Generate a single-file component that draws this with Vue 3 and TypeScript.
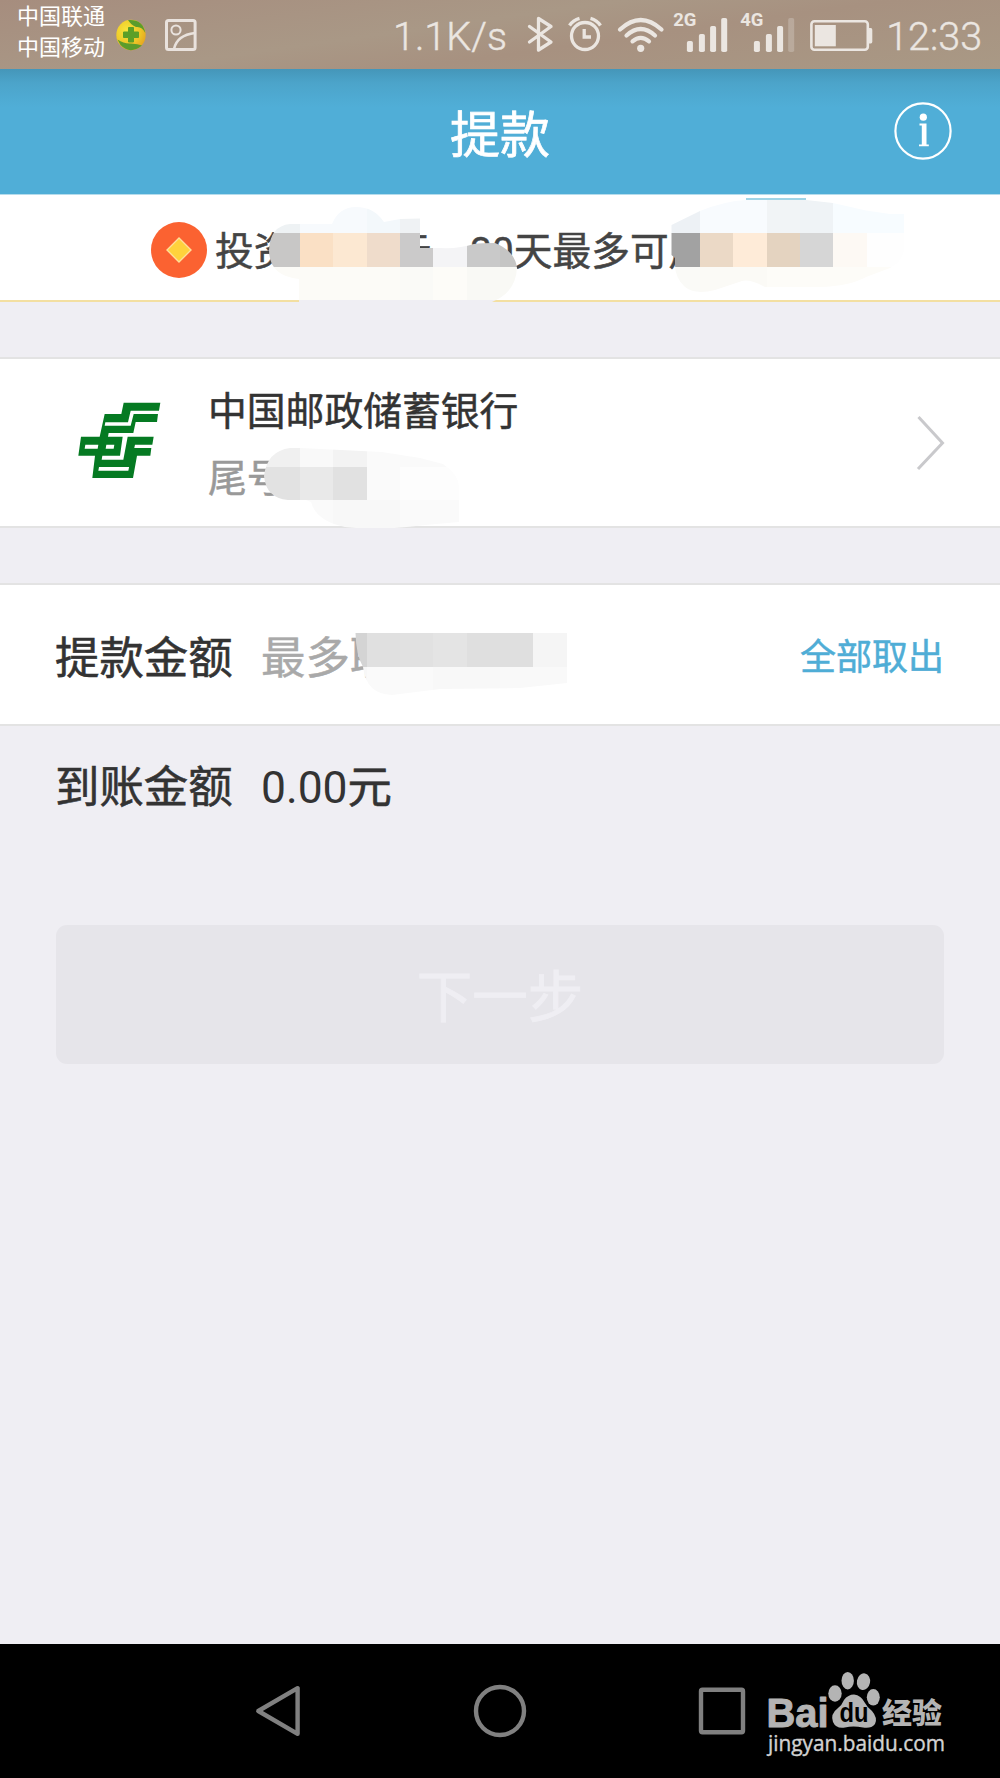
<script setup lang="ts">
interface Block {
  x: number
  y: number
  w: number
  h: number
  c: string
}
interface Mosaic {
  id: string
  path: string
  blocks: Block[]
}

const U = 100 / 3

// Builds one row of mosaic blocks; each entry is [first column, column count, colour].
function row(r: number, cells: [number, number, string][]): Block[] {
  return cells.map(([col, n, c]) => ({ x: col * U, y: r * U, w: n * U, h: U, c }))
}

const promoMosaics: Mosaic[] = [
  {
    id: 'amount',
    path: 'M269 250Q270 226 290 224H332Q339 207 356 207Q374 207 384 222L400 219L420 218.5V248H440Q459 249 474 244Q482 243 495 243Q515 251 517 268Q516 288 500 298L492 302H299V279Q269 276 269 250Z',
    blocks: [
      ...row(6, [[8, 1, '#eef2f4'], [9, 2, '#f7fafd'], [11, 1, '#f3f8fb'], [12, 1, '#eff2f4']]),
      ...row(7, [[8, 1, '#c8c7c6'], [9, 1, '#fae0c5'], [10, 1, '#fce8d2'], [11, 1, '#efdccb'], [12, 1, '#cbcaca'], [13, 1, '#f4f4f6'], [14, 1, '#c9c9c9'], [15, 1, '#c5c5c4']]),
      ...row(8, [[8, 4, '#fcfbf7'], [12, 1, '#fafaf7'], [13, 1, '#fdfcf8'], [14, 2, '#f9f9f5']]),
      ...row(9, [[8, 8, '#efeef3']]),
    ],
  },
  {
    id: 'limit',
    path: 'M671.5 225L700 211Q725 201 746 200H806L833 203L866 210.5L890 214H904V250Q902 262 890 268L866 277Q850 286 820 287H765Q750 279 742 281L715 290Q695 295 685 287Q675 278 675 265V258L671.5 255Z',
    blocks: [
      ...row(5, [[20, 8, '#f8fbfe']]),
      ...row(6, [[20, 1, '#edf1f5'], [21, 2, '#f8fbfe'], [23, 1, '#f1f4f6'], [24, 1, '#eff3f6'], [25, 3, '#f7fcff']]),
      ...row(7, [[20, 1, '#a2a2a2'], [21, 1, '#ebd9c6'], [22, 1, '#feebd8'], [23, 1, '#e4d3c0'], [24, 1, '#d6d6d6'], [25, 1, '#fdf9f4'], [26, 2, '#fefefe']]),
      ...row(8, [[20, 1, '#fafaf7'], [21, 2, '#fbfaf6'], [23, 5, '#fdfcf8']]),
    ],
  },
]

const bankMosaic: Mosaic = {
  id: 'card',
  path: 'M264 476Q267 451 290 448H300L382 452L420 458L443 464Q458 474 459 486V522L425 525Q380 531 345 527Q316 521 311 502L306 500H288Q266 498 264 476Z',
  blocks: [
    ...row(13, [[7, 2, '#f0f0f0'], [9, 1, '#f9f9f9'], [10, 1, '#f3f3f3'], [11, 3, '#fafafa']]),
    ...row(14, [[7, 2, '#e2e2e2'], [9, 1, '#e9e9e9'], [10, 1, '#e1e1e1'], [11, 1, '#fafafa'], [12, 2, '#fdfdfd']]),
    ...row(15, [[7, 3, '#fafafa'], [10, 2, '#f8f8f8'], [12, 2, '#fafafa']]),
  ],
}

const limitMosaic: Mosaic = {
  id: 'max',
  path: 'M355.5 633H567V683L520 688L440 689L392 695Q366 694 363 667Q356 655 355.5 633Z',
  blocks: [
    ...row(19, [[10, 1, '#d4d4d4'], [11, 1, '#e0e0e0'], [12, 1, '#e1e1e1'], [13, 1, '#e4e4e4'], [14, 2, '#dfdfdf'], [16, 1, '#f5f5f5']]),
    ...row(20, [[10, 1, '#f7f7f7'], [11, 2, '#fafafa'], [13, 2, '#f8f8f8'], [15, 2, '#f9f9f9']]),
  ],
}

const bars = [
  { x: 0, y: 41, h: 11 },
  { x: 12, y: 34, h: 18 },
  { x: 23.2, y: 26, h: 26 },
  { x: 34.3, y: 18, h: 34 },
]
</script>

<template>
  <div class="screen">
    <div class="status">
      <div class="carriers"><span>中国联通</span><span>中国移动</span></div>
      <svg class="shield" width="30" height="32" viewBox="0 0 30 32">
        <defs>
          <radialGradient id="gold" cx=".35" cy=".35" r=".8"><stop offset="0" stop-color="#f7e63c" /><stop offset=".6" stop-color="#edc526" /><stop offset="1" stop-color="#e29a20" /></radialGradient>
        </defs>
        <ellipse cx="15" cy="16" rx="14.7" ry="15.2" fill="url(#gold)" />
        <path d="M12 1Q27 0 29.3 14Q26 7 20 8Q15 6 12 1Z" fill="#5b9c2c" />
        <path d="M1.5 20.5Q8 25 15 24.5Q22 25 26 26.5Q14 36 4.5 26Z" fill="#5b9c2c" />
        <path d="M12.5 8.5H17.5V13H22.5V18.5H17.5V23H12.5V18.5H7.5V13H12.5Z" fill="#5c9f28" stroke="#5c9f28" stroke-linejoin="round" />
      </svg>
      <svg class="picture" width="32" height="32" viewBox="0 0 32 32" fill="none" stroke="#e9e2dd">
        <rect x="1.5" y="1.5" width="28.6" height="29" rx="2" stroke-width="3" />
        <circle cx="11" cy="11" r="4.6" stroke-width="2" />
        <path d="M9 30Q12 16 30 14" stroke-width="2.6" />
      </svg>
      <span class="speed">1.1K/s</span>
      <svg width="40" height="69" viewBox="520 0 40 69" fill="none" stroke="#ebe6e1" stroke-width="3.3" stroke-linejoin="round" stroke-linecap="round"><path d="M529.5 26.5L551 42L538.5 50V18.5L551 26.5L529.5 42" /></svg>
      <svg width="55" height="69" viewBox="560 0 55 69" fill="none" stroke="#ebe6e1" stroke-width="3.3"><circle cx="585" cy="36" r="13.5" /><path d="M584.2 29V37H591" /><path d="M569.5 25.5Q573 20 579.5 18.3M590.5 18.3Q597 20 600.5 25.5" /></svg>
      <svg width="52" height="69" viewBox="615 0 52 69" fill="none" stroke="#ebe6e1" stroke-width="4.2" stroke-linecap="round"><path d="M620 29.5Q640.7 10.5 661.5 29.5M626.5 35.5Q640.7 22.5 655 35.5M632.5 41.3Q640.7 34.5 649 41.3" /><circle cx="640.7" cy="48.3" r="3.6" fill="#ebe6e1" stroke="none" /></svg>
      <svg v-for="(net, n) in ['2G', '4G']" :key="net" width="66.6" height="69" viewBox="0 0 66.6 69" fill="#ebe6e1">
        <text x="6.2" y="25.7" class="net">{{ net }}</text>
        <rect v-for="(b, i) in bars" :key="i" :x="b.x + 19.9" :y="b.y" width="6" :height="b.h" rx="1.8" :opacity="n === 1 && i === 3 ? 0.28 : 1" />
      </svg>
      <svg width="80" height="69" viewBox="800.2 0 80 69" fill="none"><rect x="811.6" y="21.3" width="56.4" height="28.4" rx="3" stroke="#ebe6e1" stroke-width="2.6" /><path d="M869 28H871Q872.5 28 872.5 30V41.5Q872.5 43.5 871 43.5H869Z" fill="#ebe6e1" /><rect x="815" y="25" width="21" height="21.3" fill="#ebe6e1" /></svg>
      <span class="time">12:33</span>
    </div>

    <header class="header">
      <h1>提款</h1>
      <svg class="info" width="60" height="60" viewBox="893 101.5 60 60">
        <circle cx="923" cy="131.5" r="27.6" fill="none" stroke="#fff" stroke-width="2.2" />
        <circle cx="923.3" cy="117.7" r="3.6" fill="#fff" />
        <path d="M919.5 124H926.5V145H928.8V146.8H919V145H921.8V126H919.5Z" fill="#fff" />
      </svg>
    </header>

    <section class="promo">
      <svg class="coin" width="56" height="56" viewBox="0 0 56 56">
        <circle cx="28" cy="28" r="28" fill="#fb6231" />
        <path d="M28 16L40 28L28 40L16 28Z" fill="#ffd23c" stroke="#ffdf9b" stroke-width="1.4" />
      </svg>
      <span class="promo-start">投资</span>
      <span class="promo-rest">元，30天最多可用</span>
      <svg class="cover" width="1000" height="108" viewBox="0 194 1000 108">
        <path d="M746 199H806" stroke="#9fd4e6" stroke-width="2" />
        <g v-for="m in promoMosaics" :key="m.id" :clip-path="`url(#${m.id})`" shape-rendering="crispEdges">
          <clipPath :id="m.id"><path :d="m.path" /></clipPath>
          <rect v-for="(b, i) in m.blocks" :key="i" :x="b.x" :y="b.y" :width="b.w" :height="b.h" :fill="b.c" />
        </g>
      </svg>
    </section>

    <section class="bank">
      <svg class="logo" width="85" height="80" viewBox="80 150 255 240" fill="#057a22">
        <path d="M220 158H330L326 182H241L233 217H165L163 227H241L250 192H323L320 216H256L249 249H175L173 260H217L209 317H156L154 329H219L232 260H310L306 284H254L239 351H146L144 362H234L248 294H303L300 317H260L248 384H126L134 317H84L92 260H148L163 192H213Z" />
        <path d="M105 284H144L142 296H103ZM168 284H192L190 296H166Z" fill="#fff" />
      </svg>
      <div class="bank-text">
        <span class="bank-name">中国邮政储蓄银行</span>
        <span class="bank-tail">尾号</span>
      </div>
      <svg class="chevron" width="30" height="58" viewBox="916 413 30 58" fill="none" stroke="#c9c9cc" stroke-width="3"><path d="M918.5 416L942.5 442L918 468" /></svg>
      <svg class="cover" width="1000" height="171" viewBox="0 357 1000 171">
        <g clip-path="url(#card)" shape-rendering="crispEdges">
          <clipPath id="card"><path :d="bankMosaic.path" /></clipPath>
          <rect v-for="(b, i) in bankMosaic.blocks" :key="i" :x="b.x" :y="b.y" :width="b.w" :height="b.h" :fill="b.c" />
        </g>
      </svg>
    </section>

    <section class="amount">
      <span class="label">提款金额</span>
      <span class="hint">最多取</span>
      <span class="all">全部取出</span>
      <svg class="cover" width="1000" height="143" viewBox="0 583 1000 143">
        <g clip-path="url(#max)" shape-rendering="crispEdges">
          <clipPath id="max"><path :d="limitMosaic.path" /></clipPath>
          <rect v-for="(b, i) in limitMosaic.blocks" :key="i" :x="b.x" :y="b.y" :width="b.w" :height="b.h" :fill="b.c" />
        </g>
      </svg>
    </section>

    <section class="arrival">
      <span class="label">到账金额</span>
      <span>0.00<span class="unit">元</span></span>
    </section>

    <button class="next" disabled>下一步</button>

    <nav class="nav">
      <svg width="52" height="58" viewBox="252 1682.5 52 58"><path d="M258.3 1711.5L297.6 1688.7V1734.3Z" /></svg>
      <svg width="56" height="56" viewBox="-28 -28 56 56"><circle r="24" /></svg>
      <svg width="52" height="52" viewBox="-26 -26 52 52"><rect x="-21" y="-21.3" width="42" height="42.6" rx="1.5" /></svg>
      <svg class="mark" width="190" height="113" viewBox="760 1665 190 113">
        <g class="mark-shape">
          <ellipse cx="835" cy="1693.5" rx="6.7" ry="8.3" />
          <ellipse cx="847.7" cy="1680.7" rx="6.2" ry="8.7" />
          <ellipse cx="863.5" cy="1681.7" rx="6.6" ry="8.4" transform="rotate(10 863.5 1681.7)" />
          <ellipse cx="873.3" cy="1697.3" rx="6.5" ry="8.3" />
          <path d="M854 1694.5Q861 1695 865 1703Q867 1707 872 1711Q878 1718 875 1724Q871 1729 863 1727.5Q853 1725.5 845 1727.5Q836 1729 833 1722Q830 1714 838 1708Q842 1705 844 1700Q848 1694.5 854 1694.5Z" />
          <text x="766.5" y="1726.5" class="bai" textLength="62" lengthAdjust="spacingAndGlyphs">Bai</text>
          <text x="882" y="1723.5" class="exp" textLength="60" lengthAdjust="spacingAndGlyphs">经验</text>
        </g>
        <text x="839.5" y="1722" class="du" textLength="29" lengthAdjust="spacingAndGlyphs">du</text>
        <text x="768" y="1750.8" class="url" textLength="177" lengthAdjust="spacingAndGlyphs">jingyan.baidu.com</text>
      </svg>
    </nav>
  </div>
</template>

<style>
body {
  background: #efeef3;
}
</style>

<style scoped>
.screen {
  width: 1000px;
  height: 1778px;
  display: flex;
  flex-direction: column;
  background: #efeef3;
  color: #333;
  font-family: Roboto, "Noto Sans CJK SC", sans-serif;
  white-space: nowrap;
  overflow: hidden;
}
svg {
  display: block;
  flex: none;
}
.status {
  flex: none;
  height: 69px;
  box-sizing: border-box;
  padding-left: 17px;
  display: flex;
  align-items: center;
  color: #ebe6e1;
  background: linear-gradient(172deg, #a68d7e 0%, #a99886 42%, #a79180 60%, #a99985 100%);
}
.carriers {
  width: 89px;
  padding-bottom: 3px;
  display: flex;
  flex-direction: column;
  font-size: 22px;
  line-height: 30.6px;
  color: #fff;
}
.shield {
  margin-left: 10px;
}
.picture {
  margin-left: 19px;
}
.speed,
.time {
  font-size: 39.5px;
  font-weight: 300;
  line-height: 69px;
  padding-top: 4px;
  -webkit-text-stroke: 0.4px #ebe6e1;
}
.speed {
  width: 131px;
  margin-left: 192px;
  padding-left: 4px;
  box-sizing: border-box;
}
.time {
  margin-left: 6px;
}
.net {
  font: bold 18.5px Roboto, sans-serif;
}
.header {
  flex: none;
  height: 125px;
  display: flex;
  align-items: center;
  justify-content: center;
  position: relative;
  background: linear-gradient(#4596b9 0, #4ca4ca 14px, #50aed7 38px);
  color: #fff;
}
h1 {
  margin: 0;
  padding-top: 9px;
  font-size: 50px;
  font-weight: 400;
  line-height: 60px;
  -webkit-text-stroke: 0.7px #fff;
}
.info {
  position: absolute;
  right: 47px;
  top: 32px;
}
.promo {
  flex: none;
  height: 108px;
  box-sizing: border-box;
  border-top: 1px solid #b5dcec;
  border-bottom: 2px solid #f3dfa1;
  padding: 4px 0 0 151px;
  background: #fff;
  display: flex;
  align-items: center;
  position: relative;
  font-size: 38.7px;
  color: #444;
  -webkit-text-stroke: 0.5px #444;
}
.promo-start,
.promo-rest {
  padding-bottom: 4px;
}
.promo-start {
  margin-left: 8px;
  width: 178px;
}
.promo .cover {
  top: -1px;
}
.cover {
  position: absolute;
  left: 0;
  top: -2px;
}
.bank {
  flex: none;
  height: 171px;
  margin-top: 55px;
  box-sizing: border-box;
  border-top: 2px solid #e3e3e3;
  border-bottom: 2px solid #e3e3e3;
  background: #fff;
  display: flex;
  align-items: center;
  position: relative;
  padding: 0 54px 0 77px;
}
.logo {
  margin-bottom: 5px;
}
.bank-text {
  margin-left: 46px;
  padding-top: 6px;
  display: flex;
  flex-direction: column;
  font-size: 38.8px;
  line-height: 66.5px;
  -webkit-text-stroke: 0.5px;
}
.bank-tail {
  color: #999;
}
.chevron {
  margin-left: auto;
}
.amount {
  flex: none;
  height: 143px;
  margin-top: 55px;
  box-sizing: border-box;
  border-top: 2px solid #e3e3e3;
  border-bottom: 2px solid #e3e3e3;
  background: #fff;
  display: flex;
  align-items: center;
  position: relative;
  padding: 0 56px 1px 55px;
  font-size: 44.4px;
  -webkit-text-stroke: 0.5px;
}
.label {
  width: 206px;
  -webkit-text-stroke: 0.6px;
}
.unit {
  -webkit-text-stroke: 0.6px;
}
.hint {
  color: #a9a9a9;
}
.all {
  margin-left: auto;
  font-size: 36px;
  color: #4fadd6;
}
.arrival {
  flex: none;
  height: 120px;
  box-sizing: border-box;
  padding: 0 0 6px 55px;
  display: flex;
  align-items: center;
  font-size: 44.4px;
}
.next {
  flex: none;
  height: 139px;
  margin: 79px 56px 0;
  padding: 0 0 4px;
  border: 0;
  border-radius: 11px;
  background: #e6e5ea;
  color: #efeef3;
  font: 55.5px "Noto Sans CJK SC", sans-serif;
  -webkit-text-stroke: 0.8px #efeef3;
}
.nav {
  flex: none;
  height: 134px;
  margin-top: auto;
  padding: 0 167px;
  box-sizing: border-box;
  display: grid;
  grid-template-columns: repeat(3, 222px);
  place-items: center;
  position: relative;
  background: #000;
  fill: none;
  stroke: #808080;
  stroke-width: 4.4px;
  stroke-linejoin: round;
}
.mark {
  position: absolute;
  left: 760px;
  top: 21px;
  stroke: none;
}
.mark-shape {
  fill: #b4b4b4;
}
.bai {
  font: bold 40px "Liberation Sans", sans-serif;
  stroke: #b4b4b4;
  stroke-width: 1px;
}
.exp {
  font: 900 29px "Noto Sans CJK SC", sans-serif;
}
.du {
  font: bold 28px "Liberation Sans", sans-serif;
  fill: #000;
}
.url {
  font: 22px "Open Sans", sans-serif;
  fill: #d2d2d2;
  stroke: #d2d2d2;
  stroke-width: 0.4px;
}
</style>
